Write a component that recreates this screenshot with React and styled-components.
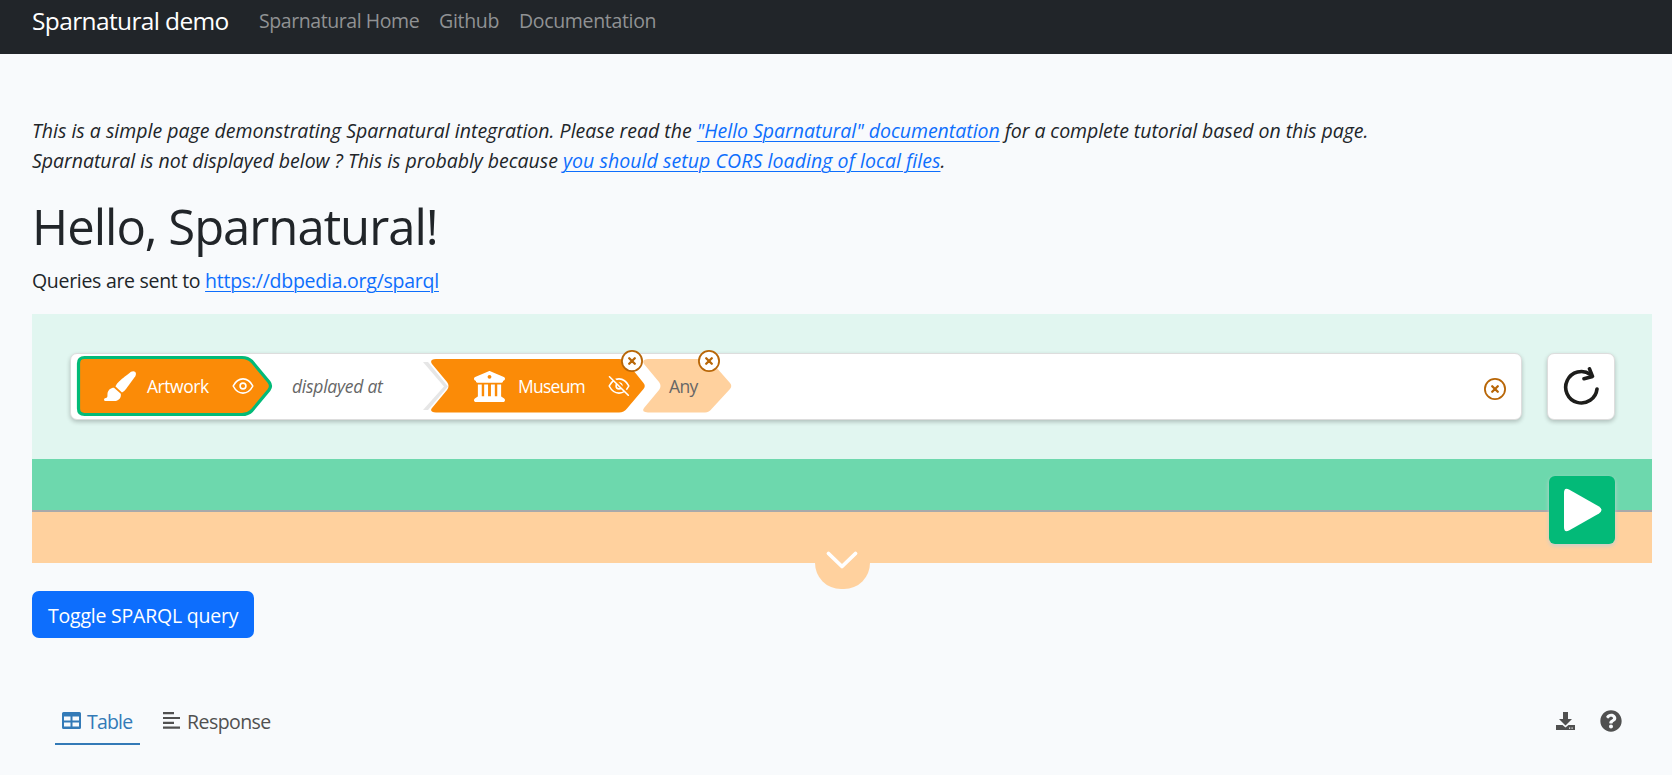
import React from "react";
import styled, { createGlobalStyle } from "styled-components";
import { FaBuildingColumns } from "react-icons/fa6";
import { FaQuestionCircle } from "react-icons/fa";

const GlobalStyle = createGlobalStyle`
  *, *::before, *::after { box-sizing: border-box; }
  body {
    margin: 0;
    background: #f8fafc;
    color: #212529;
    font-family: "Open Sans", "Noto Sans", sans-serif;
    font-size: 20px;
    line-height: 30px;
    overflow: hidden;
  }
`;

const Page = styled.div`
  height: 775px;
  overflow: hidden;
`;

const Navbar = styled.nav`
  display: flex;
  height: 54px;
  padding: 4px 32px 0;
  background: #212529;
  white-space: nowrap;
`;

const Brand = styled.a`
  width: 227px;
  color: #fff;
  font-size: 24.5px;
  line-height: 34px;
  letter-spacing: -0.63px;
`;

const NavLink = styled.a`
  width: ${(p) => p.$width}px;
  color: #909294;
  font-size: 19.5px;
  line-height: 34px;
  letter-spacing: ${(p) => p.$track}px;
`;

const Content = styled.main`
  padding: 62px 20px 0 32px;
  white-space: nowrap;
`;

const Intro = styled.p`
  margin: 0;
  font-style: italic;
  font-size: 19.5px;
`;

const Run = styled.span`
  letter-spacing: ${(p) => p.$track}px;
`;

const Link = styled.a`
  color: #0d6efd;
  text-decoration: underline;
  text-decoration-thickness: 1px;
  text-underline-offset: 3px;
  letter-spacing: ${(p) => p.$track}px;
`;

const Title = styled.h1`
  margin: 20px 0 0;
  font-size: 49px;
  line-height: 60px;
  font-weight: 400;
  letter-spacing: -1px;
`;

const Endpoint = styled.p`
  margin: 10px 0 0;
  font-size: 19.5px;
`;

const Widget = styled.section`
  margin-top: 18px;
  width: 1620px;
`;

const QueryArea = styled.div`
  display: flex;
  gap: 25px;
  height: 145px;
  padding: 39px 37px 0 38px;
  background: #e1f6f0;
`;

const Card = styled.div`
  display: flex;
  height: 67px;
  width: ${(p) => p.$width}px;
  background: #fff;
  border: 1px solid #ddd;
  border-radius: 7px;
  box-shadow: 0 2px 4px rgba(0, 0, 0, 0.22);
`;

const Criterion = styled(Card)`
  padding: 2px 15px 0 6px;
`;

const ResetButton = styled(Card)`
  align-items: center;
  justify-content: center;
  padding-right: 1px;
`;

const Chip = styled.div`
  position: relative;
  display: flex;
  align-items: center;
  width: ${(p) => p.$width}px;
  height: 60px;
  padding-left: ${(p) => p.$pad}px;
  margin-left: ${(p) => p.$shift || 0}px;
  color: ${(p) => p.$color || "#fff"};
  font-size: 17.5px;
  letter-spacing: ${(p) => p.$track}px;
`;

const ChipShape = styled.svg`
  position: absolute;
  inset: 0;
  overflow: visible;
`;

const ChipIcon = styled.span`
  position: relative;
  display: flex;
  width: ${(p) => p.$width}px;
`;

const ChipLabel = styled.span`
  position: relative;
  width: ${(p) => p.$width}px;
`;

const Relation = styled.div`
  width: 159px;
  padding-left: 20px;
  line-height: 60px;
  font-size: 17.5px;
  font-style: italic;
  color: #666;
  letter-spacing: -0.25px;
`;

const RemoveBadge = styled.span`
  position: absolute;
  top: -6px;
  left: ${(p) => p.$left}px;
  display: flex;
`;

const RowRemove = styled.span`
  display: flex;
  margin: 22px 0 0 auto;
`;

const SubmitBand = styled.div`
  display: flex;
  justify-content: flex-end;
  height: 53px;
  padding: 17px 37px 0 0;
  background: #6dd8ad;
  border-bottom: 2px solid #a9a9a9;
`;

const PlayButton = styled.button`
  position: relative;
  display: flex;
  align-items: center;
  justify-content: center;
  width: 66px;
  height: 68px;
  padding: 0;
  border: 0;
  border-radius: 6px;
  background: #03ba78;
  box-shadow: 0 2px 4px #c6cfce;
`;

const OptionsBand = styled.div`
  display: flex;
  justify-content: center;
  height: 51px;
  background: #ffd19e;
`;

const OptionsToggle = styled.div`
  display: flex;
  justify-content: center;
  width: 55px;
  height: 26px;
  margin-top: 51px;
  border-radius: 0 0 28px 28px;
  background: #ffd19e;
`;

const Chevron = styled.svg`
  margin-top: -12px;
  overflow: visible;
`;

const ToggleButton = styled.button`
  display: block;
  width: 222px;
  height: 47px;
  margin-top: 28px;
  padding: 2px 0 0 16px;
  border: 0;
  border-radius: 7px;
  background: #0d6efd;
  color: #fff;
  font: inherit;
  font-size: 19.5px;
  text-align: left;
  letter-spacing: -0.22px;
`;

const ResultBar = styled.div`
  display: flex;
  align-items: flex-start;
  margin-top: 64px;
  padding: 0 30px 0 23px;
`;

const Tab = styled.div`
  display: flex;
  align-items: center;
  gap: ${(p) => p.$gap}px;
  width: ${(p) => p.$width}px;
  height: 43px;
  padding: 0 0 4px 7px;
  margin-right: 16px;
  border-bottom: 2px solid ${(p) => (p.$active ? "#337ab7" : "transparent")};
  color: ${(p) => (p.$active ? "#337ab7" : "#505050")};
  font-size: 19.5px;
  letter-spacing: ${(p) => p.$track}px;
`;

const TabLabel = styled.span`
  padding-top: 2px;
`;

const Tools = styled.div`
  display: flex;
  align-items: center;
  gap: 25px;
  height: 38px;
  margin-left: auto;
  color: #505050;
`;

const RemoveIcon = () => (
  <svg width="22" height="22" viewBox="0 0 22 22" fill="none" stroke="#b86607">
    <circle cx="11" cy="11" r="10.1" fill="#fff" strokeWidth="1.8" />
    <path d="M8.200 8.200l5.600 5.600M13.800 8.200l-5.600 5.600" strokeWidth="2.300" strokeLinecap="round" />
  </svg>
);

const BrushIcon = () => (
  <svg width="32" height="30" viewBox="0 0 32 30" fill="currentColor">
    <path d="M11.500 15.500C13 12 15 10 27 0.800Q29.500 -0.600 31.300 1Q32.600 2.800 31.300 5.300L22 18Q20.500 20 18 21.500Z" />
    <path d="M10 16.700L16.800 22.700C17.500 27 14.500 30 10.500 30H1.500Q0 30 0 28.500Q0 27.200 1.800 27C4 26.700 3.300 24.500 3.500 22.500C4 19 6.500 16.700 10 16.700Z" />
  </svg>
);

const EyeIcon = ({ off }) => (
  <svg width="22" height="20" viewBox="0 0 22 20" fill="none" stroke="#fff" strokeWidth="1.600" strokeLinecap="round">
    <path d="M1.200 10C3.500 5.500 7 2.900 11 2.900S18.500 5.500 20.800 10C18.500 14.500 15 17.100 11 17.100S3.500 14.500 1.200 10Z" />
    <circle cx="11" cy="10" r="2.900" />
    {off && <path d="M3.200 0.400L21.200 18" stroke="#fb8b07" strokeWidth="2.200" />}
    {off && <path d="M1.500 0.800L20.300 19.300" />}
  </svg>
);

export default function App() {
  return (
    <Page>
      <GlobalStyle />
      <Navbar>
        <Brand>Sparnatural demo</Brand>
        <NavLink $width={180} $track={-0.43}>Sparnatural Home</NavLink>
        <NavLink $width={80} $track={-0.3}>Github</NavLink>
        <NavLink $width={140} $track={-0.33}>Documentation</NavLink>
      </Navbar>
      <Content>
        <Intro>
          <Run $track={0.01}>This is a simple page demonstrating Sparnatural integration. Please read the </Run>
          <Link $track={-0.02}>"Hello Sparnatural" documentation</Link>
          <Run $track={-0.05}> for a complete tutorial based on this page.</Run>
          <br />
          <Run $track={-0.02}>Sparnatural is not displayed below ? This is probably because </Run>
          <Link $track={0.07}>you should setup CORS loading of local files</Link>.
        </Intro>
        <Title>Hello, Sparnatural!</Title>
        <Endpoint>
          <Run $track={-0.3}>Queries are sent to </Run>
          <Link $track={-0.25}>https://dbpedia.org/sparql</Link>
        </Endpoint>

        <Widget>
          <QueryArea>
            <Criterion $width={1452}>
              <Chip $width={195} $pad={27} $track={-0.45}>
                <ChipShape width="195" height="60">
                  <path
                    d="M7.500 1.500H165Q171 1.500 175 5.500L192 26Q195 30 192 34L175 54.500Q171 58.500 165 58.500H7.500Q1.500 58.500 1.500 52.500V7.500Q1.500 1.500 7.500 1.500Z"
                    fill="#fb8b07"
                    stroke="#03ba78"
                    strokeWidth="3.200"
                  />
                </ChipShape>
                <ChipIcon $width={43}><BrushIcon /></ChipIcon>
                <ChipLabel $width={85}>Artwork</ChipLabel>
                <ChipIcon $width={22}><EyeIcon /></ChipIcon>
              </Chip>
              <Relation>displayed at</Relation>
              <Chip $width={214} $pad={43} $track={-0.75}>
                <ChipShape width="214" height="60">
                  <path d="M-8 6L13 30.500L-8 54H-3L17 30.500L-3 6Z" fill="#e6e6e6" />
                  <path d="M5 3H188Q193 3 196 6.500L212.500 27Q215 30 212.500 33L196 52.500Q193 56.500 188 56.500H5Q-2 56 1 52L16 34Q19 30 16 26L1 8Q-2 3.500 5 3Z" fill="#fb8b07" />
                </ChipShape>
                <ChipIcon $width={44}><FaBuildingColumns size={31} /></ChipIcon>
                <ChipLabel $width={90}>Museum</ChipLabel>
                <ChipIcon $width={22}><EyeIcon off /></ChipIcon>
                <RemoveBadge $left={190}><RemoveIcon /></RemoveBadge>
              </Chip>
              <Chip $width={89} $pad={26} $shift={-2} $color="#666" $track={-0.6}>
                <ChipShape width="89" height="60">
                  <path d="M5 3H62Q66 3 69 6.500L87 27Q89.500 30 87 33L69 52.500Q66 56.500 62 56.500H5Q-2 56 1 52L16 34Q19 30 16 26L1 8Q-2 3.500 5 3Z" fill="#ffd19e" />
                </ChipShape>
                <ChipLabel $width={40}>Any</ChipLabel>
                <RemoveBadge $left={55}><RemoveIcon /></RemoveBadge>
              </Chip>
              <RowRemove><RemoveIcon /></RowRemove>
            </Criterion>
            <ResetButton $width={68}>
              <svg width="36" height="40" viewBox="0 0 36 40" fill="none" stroke="#1d1d1b" strokeWidth="3.600" strokeLinecap="round" strokeLinejoin="round">
                <path d="M34 22A15.700 15.700 0 1 1 27.500 7.500" />
                <path d="M26.500 1.800L29.500 9.400L21 11.700" />
              </svg>
            </ResetButton>
          </QueryArea>
          <SubmitBand>
            <PlayButton>
              <svg width="40" height="44" viewBox="0 0 40 44">
                <path d="M2 5Q2 -1 7 1.500L37 18.500Q42 22 37 25.500L7 42.500Q2 45 2 39Z" fill="#fff" />
              </svg>
            </PlayButton>
          </SubmitBand>
          <OptionsBand>
            <OptionsToggle>
              <Chevron width="30" height="18" viewBox="0 0 30 18" fill="none" stroke="#fff" strokeWidth="3.800" strokeLinecap="round" strokeLinejoin="round">
                <path d="M1.500 2.500L15 15.500L28.500 2.500" />
              </Chevron>
            </OptionsToggle>
          </OptionsBand>
        </Widget>

        <ToggleButton>Toggle SPARQL query</ToggleButton>

        <ResultBar>
          <Tab $active $width={85} $gap={6} $track={-0.8}>
            <svg width="19" height="17" viewBox="0 0 19 17">
              <path fillRule="evenodd" fill="currentColor" d="M1.500 0H17.500Q19 0 19 1.500V15.500Q19 17 17.500 17H1.500Q0 17 0 15.500V1.500Q0 0 1.500 0ZM2 4.500V8.500H8.500V4.500ZM10.500 4.500V8.500H17V4.500ZM2 10.500V14.500H8.500V10.500ZM10.500 10.500V14.500H17V10.500Z" />
            </svg>
            <TabLabel>Table</TabLabel>
          </Tab>
          <Tab $width={125} $gap={7} $track={-0.55}>
            <svg width="17" height="17" viewBox="0 0 17 17" stroke="currentColor" strokeWidth="2.200">
              <path d="M0 1.200H11M0 6H17M0 10.800H11M0 15.600H17" />
            </svg>
            <TabLabel>Response</TabLabel>
          </Tab>
          <Tools>
            <svg width="19" height="18" viewBox="0 0 19 18" fill="currentColor">
              <path d="M7 0H12V7H16L9.500 13.500L3 7H7Z" />
              <path d="M0 13H6.500L9.500 15.500L12.500 13H19V18H0Z" />
              <path d="M13 16.200h1.200M15.500 16.200h1.200" stroke="#f8fafc" strokeWidth="1.200" />
            </svg>
            <FaQuestionCircle size={22} />
          </Tools>
        </ResultBar>
      </Content>
    </Page>
  );
}
